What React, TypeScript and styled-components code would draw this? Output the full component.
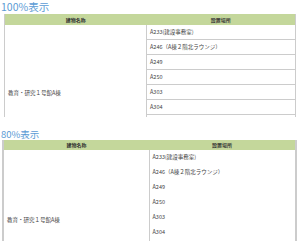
import styled, { createGlobalStyle } from 'styled-components';

const GlobalStyle = createGlobalStyle`
  body {
    margin: 0;
    background: #ffffff;
    font-family: "Noto Sans CJK JP", "Noto Sans", sans-serif;
  }
`;

const rooms = [
  'A233(建設事務室)',
  'A246（A棟２階北ラウンジ）',
  'A249',
  'A250',
  'A303',
  'A304',
];

interface ViewProps {
  label: string;
  titleSize: number;
  titleHeight: number;
  gapTop: number;
  inset: number;
  width: number;
  split: number;
  head: number;
  clip: number;
  ruled: boolean;
  edge: number;
  rest: number;
}

function View(p: ViewProps) {
  return (
    <Section $gapTop={p.gapTop}>
      <Title $size={p.titleSize} $height={p.titleHeight}>{p.label}</Title>
      <Frame $clip={p.clip} $inset={p.inset}>
        <Table $width={p.width} $edge={p.edge}>
          <colgroup>
            <col style={{ width: p.split }} />
            <col />
          </colgroup>
          <thead>
            <tr>
              <Th $head={p.head}>建物名称</Th>
              <Th $head={p.head}>設置場所</Th>
            </tr>
          </thead>
          <tbody>
            {rooms.map((room, i) => (
              <tr key={room}>
                {i === 0 && <Building rowSpan={rooms.length + 1}>教育・研究１号館A棟</Building>}
                <Room $ruled={p.ruled}>{room}</Room>
              </tr>
            ))}
            {/* rows below the visible edge of the capture */}
            <tr>
              <Rest $h={p.rest} />
            </tr>
          </tbody>
        </Table>
      </Frame>
    </Section>
  );
}

export default function App() {
  return (
    <Page>
      <GlobalStyle />
      <View
        label="100%表示"
        titleSize={10.5}
        titleHeight={14}
        gapTop={0}
        inset={4}
        width={292}
        split={142}
        head={11}
        clip={103}
        ruled={true}
        edge={1}
        rest={45}
      />
      <View
        label="80%表示"
        titleSize={9.5}
        titleHeight={12}
        gapTop={11}
        inset={2}
        width={295}
        split={146}
        head={10}
        clip={101}
        ruled={false}
        edge={2}
        rest={49}
      />
    </Page>
  );
}

const Page = styled.div`
  width: 300px;
  height: 241px;
  overflow: hidden;
`;

const Section = styled.section<{ $gapTop: number }>`
  display: flex;
  flex-direction: column;
  padding-top: ${(p) => p.$gapTop}px;
`;

const Title = styled.h2<{ $size: number; $height: number }>`
  margin: 0;
  padding-left: 1px;
  font-size: ${(p) => p.$size}px;
  line-height: ${(p) => p.$height}px;
  height: ${(p) => p.$height}px;
  font-weight: 400;
  color: #5b9bd5;
`;

const Frame = styled.div<{ $clip: number; $inset: number }>`
  height: ${(p) => p.$clip}px;
  overflow: hidden;
  padding-left: ${(p) => p.$inset}px;
`;

const Table = styled.table<{ $width: number; $edge: number }>`
  width: ${(p) => p.$width}px;
  table-layout: fixed;
  border-collapse: collapse;
  border-left: ${(p) => p.$edge}px solid #cccccc;
  border-right: ${(p) => p.$edge}px solid #cccccc;
`;

const Th = styled.th<{ $head: number }>`
  height: ${(p) => p.$head}px;
  padding: 0;
  background: #c4d79b;
  font-size: 5px;
  font-weight: 700;
  color: #333333;
  text-align: center;
  line-height: ${(p) => p.$head}px;
`;

const Building = styled.td`
  padding: 0 0 0 3px;
  vertical-align: middle;
  border-right: 1px solid #cccccc;
  font-size: 5.5px;
  color: #444444;
  white-space: nowrap;
`;

const Room = styled.td<{ $ruled: boolean }>`
  height: 14px;
  padding: 0 0 0 3px;
  line-height: 14px;
  font-size: 5.5px;
  color: #444444;
  white-space: nowrap;
  border-bottom: 1px solid ${(p) => (p.$ruled ? '#cccccc' : 'transparent')};
`;

const Rest = styled.td<{ $h: number }>`
  height: ${(p) => p.$h}px;
  padding: 0;
`;
